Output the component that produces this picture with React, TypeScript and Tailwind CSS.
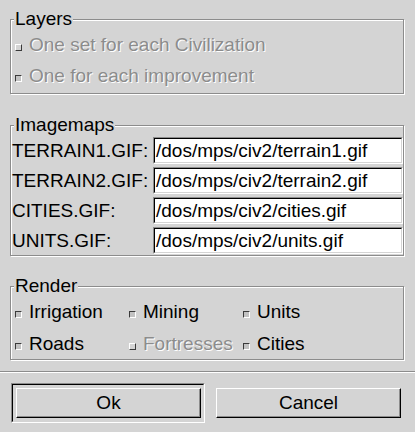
const BG = 'bg-[#d4d4d4]';

const imagemaps = [
  { name: 'TERRAIN1.GIF:', path: '/dos/mps/civ2/terrain1.gif' },
  { name: 'TERRAIN2.GIF:', path: '/dos/mps/civ2/terrain2.gif' },
  { name: 'CITIES.GIF:', path: '/dos/mps/civ2/cities.gif' },
  { name: 'UNITS.GIF:', path: '/dos/mps/civ2/units.gif' },
];

const render = [
  { label: 'Irrigation', on: true, disabled: false },
  { label: 'Mining', on: true, disabled: false },
  { label: 'Units', on: true, disabled: false },
  { label: 'Roads', on: true, disabled: false },
  { label: 'Fortresses', on: false, disabled: true },
  { label: 'Cities', on: true, disabled: false },
];

function Frame({ label, className, children }: { label: string; className: string; children: React.ReactNode }) {
  return (
    <div
      className={`relative ml-[10px] w-[394px] border border-[#8c8c8c] shadow-[1px_1px_0_#fff,inset_1px_1px_0_#fff] ${className}`}
    >
      <span className={`absolute left-[3px] top-[-11px] px-[1px] leading-[20px] text-black ${BG}`}>{label}</span>
      {children}
    </div>
  );
}

function Check({ label, on, disabled }: { label: string; on: boolean; disabled: boolean }) {
  const box = on
    ? 'border-t-[#3a3a3a] border-l-[#3a3a3a] border-b-white border-r-white bg-[#c2c2c2]'
    : 'border-t-white border-l-white border-b-[#3a3a3a] border-r-[#3a3a3a]';
  return (
    <div className="flex h-[20px] items-start">
      <span className={`mt-[9px] h-[7px] w-[7px] shrink-0 border ${box}`} />
      <span
        className={`ml-[7px] whitespace-nowrap leading-[20px] ${
          disabled ? 'text-[#8c8c8c] [text-shadow:1px_1px_0_#fff]' : 'text-black'
        }`}
      >
        {label}
      </span>
    </div>
  );
}

function Button({ children }: { children: React.ReactNode }) {
  return (
    <button className="flex h-[30px] w-[185px] items-center justify-center border border-t-white border-l-white border-b-black border-r-black shadow-[inset_-1px_-1px_0_#8c8c8c] leading-[20px] text-black">
      {children}
    </button>
  );
}

export default function App() {
  return (
    <div className={`h-[432px] w-[415px] overflow-hidden font-['Liberation_Sans',Arial,sans-serif] text-[19px] ${BG}`}>
      <div className="pt-[19px]">
        <Frame label="Layers" className="h-[75px]">
          <div className="flex flex-col gap-[11px] pl-[4px] pt-[15px]">
            <Check label="One set for each Civilization" on={false} disabled />
            <Check label="One for each improvement" on disabled />
          </div>
        </Frame>

        <Frame label="Imagemaps" className="mt-[31px] h-[131px]">
          <div className="flex flex-col gap-[3px] pt-[11px]">
            {imagemaps.map((m) => (
              <div key={m.name} className="flex h-[27px] items-center">
                <span className="w-[142px] pl-[1px] leading-[20px] text-black">{m.name}</span>
                <div className="h-[27px] flex-1 border border-t-[#8c8c8c] border-l-[#8c8c8c] border-b-white border-r-white">
                  <div className="h-full border border-t-black border-l-black border-b-[#d4d4d4] border-r-[#d4d4d4] bg-white pl-[1px] leading-[23px] text-black">
                    {m.path}
                  </div>
                </div>
              </div>
            ))}
          </div>
        </Frame>

        <Frame label="Render" className="mt-[30px] h-[74px]">
          <div className="grid grid-cols-[114px_114px_1fr] gap-y-[12px] pl-[4px] pt-[15px]">
            {render.map((r) => (
              <Check key={r.label} label={r.label} on={r.on} disabled={r.disabled} />
            ))}
          </div>
        </Frame>
      </div>

      <div className="mt-[11px] h-[2px] border-t border-t-[#8c8c8c] border-b border-b-white" />

      <div className="mt-[10px] flex items-center pl-[11px]">
        <div className="h-[40px] w-[194px] border border-t-[#8c8c8c] border-l-[#8c8c8c] border-b-white border-r-white">
          <div className="h-full border border-t-black border-l-black border-b-[#d4d4d4] border-r-[#d4d4d4] pl-[3px] pt-[3px]">
            <Button>Ok</Button>
          </div>
        </div>
        <div className="ml-[11px]">
          <Button>Cancel</Button>
        </div>
      </div>
    </div>
  );
}
